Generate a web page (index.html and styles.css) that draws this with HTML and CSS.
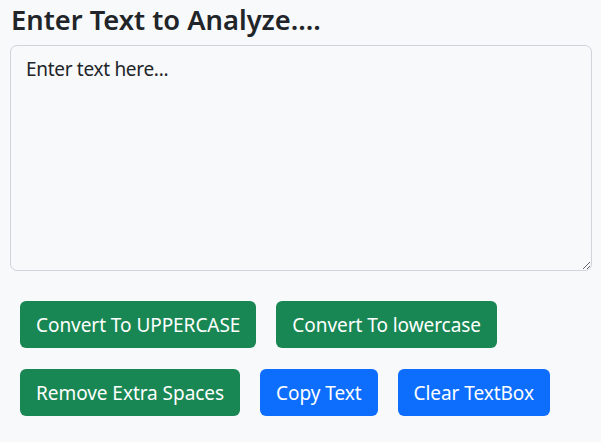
FILE: index.html
```html
<!DOCTYPE html>
<html lang="en">
<head>
<meta charset="utf-8">
<title>Text Utils</title>
<link rel="stylesheet" href="styles.css">
</head>
<body>
<div class="container">
  <h2 class="title">Enter Text to Analyze....</h2>
  <textarea class="box" placeholder="Enter text here..."></textarea>
  <div class="actions">
    <div class="row">
      <button class="btn green">Convert To UPPERCASE</button>
      <button class="btn green">Convert To lowercase</button>
    </div>
    <div class="row">
      <button class="btn green">Remove Extra Spaces</button>
      <button class="btn blue">Copy Text</button>
      <button class="btn blue">Clear TextBox</button>
    </div>
  </div>
</div>
</body>
</html>
```
FILE: styles.css
```css
html, body {
  margin: 0;
  padding: 0;
  background: #f8f9fa;
  font-family: "Noto Sans", "Open Sans", sans-serif;
  color: #212529;
}
.container {
  padding: 0 9px 0 10px;
}
.title {
  margin: 0;
  padding-top: 3px;
  padding-left: 1px;
  font-size: 27.3px;
  font-weight: 600;
  line-height: 33px;
  height: 42px;
}
.box {
  display: block;
  box-sizing: border-box;
  width: 100%;
  height: 226px;
  margin: 0;
  padding: 8px 15px;
  border: 1.25px solid #ced4da;
  border-radius: 7px;
  background: #f8f9fa;
  font-family: inherit;
  font-size: 19px;
  letter-spacing: -0.3px;
  line-height: 30px;
  color: #212529;
  resize: vertical;
}
.box::placeholder {
  color: #212529;
  opacity: 1;
}
.actions {
  display: flex;
  flex-direction: column;
  gap: 21px;
  padding: 30px 0 0 10px;
}
.row {
  display: flex;
  gap: 20px;
}
.btn {
  box-sizing: border-box;
  height: 47px;
  padding: 0 16px;
  border: none;
  border-radius: 6px;
  font-family: inherit;
  font-size: 19px;
  letter-spacing: -0.05px;
  line-height: 30px;
  color: #fff;
}
.green { background: #198754; }
.blue { background: #0d6efd; }
```
